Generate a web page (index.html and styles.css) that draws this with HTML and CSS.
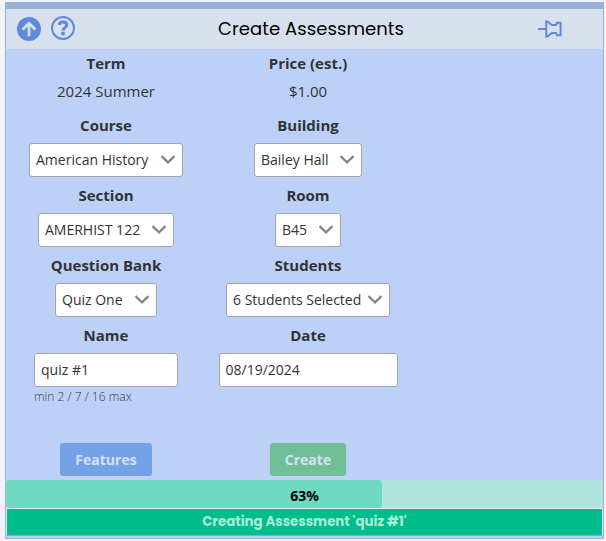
FILE: index.html
```html
<!DOCTYPE html>
<html lang="en">
<head>
<meta charset="utf-8">
<title>Create Assessments</title>
<link rel="stylesheet" href="styles.css">
</head>
<body>
<main class="panel">
  <header class="header">
    <svg class="icon" viewBox="0 0 24 24"><circle cx="12" cy="12" r="12" fill="#5d8add"/><path d="M12 19.2V6.5M5.6 12.6L12 6.2L18.4 12.6" fill="none" stroke="#d8e0ed" stroke-width="2.8"/></svg>
    <svg class="icon help" viewBox="0 0 24 24"><circle cx="12" cy="12" r="11" fill="none" stroke="#5d8add" stroke-width="2"/><path d="M8.2 8.8C8.6 5.2 15.8 5 15.8 9.1C15.8 11.7 12 11.7 12 14.5" fill="none" stroke="#5d8add" stroke-width="3"/><circle cx="12" cy="17.4" r="2" fill="#5d8add"/></svg>
    <h1 class="title"><span>Create Assessments</span></h1>
    <svg class="pin" viewBox="0 0 24 20"><path d="M0 10H8M8.3 2.3V17.7L9.7 17.3L13.8 14H18L19 16.3H22.6V3.7H19L18 6H13.8L9.7 2.7Z" fill="none" stroke="#5d8add" stroke-width="2"/></svg>
  </header>
  <form class="form">
    <div class="field brief"><label>Term</label><span class="value">2024 Summer</span></div>
    <div class="field brief"><label>Price (est.)</label><span class="value">$1.00</span></div>
    <div class="field"><label>Course</label><div class="box course">American History<svg class="chevron" viewBox="0 0 14 9"><path d="M0.5 1.2L7 7.3L13.5 1.2"/></svg></div></div>
    <div class="field"><label>Building</label><div class="box building">Bailey Hall<svg class="chevron" viewBox="0 0 14 9"><path d="M0.5 1.2L7 7.3L13.5 1.2"/></svg></div></div>
    <div class="field"><label>Section</label><div class="box section">AMERHIST 122<svg class="chevron" viewBox="0 0 14 9"><path d="M0.5 1.2L7 7.3L13.5 1.2"/></svg></div></div>
    <div class="field"><label>Room</label><div class="box room">B45<svg class="chevron" viewBox="0 0 14 9"><path d="M0.5 1.2L7 7.3L13.5 1.2"/></svg></div></div>
    <div class="field"><label>Question Bank</label><div class="box bank">Quiz One<svg class="chevron" viewBox="0 0 14 9"><path d="M0.5 1.2L7 7.3L13.5 1.2"/></svg></div></div>
    <div class="field"><label>Students</label><div class="box students">6 Students Selected<svg class="chevron" viewBox="0 0 14 9"><path d="M0.5 1.2L7 7.3L13.5 1.2"/></svg></div></div>
    <div class="field"><label>Name</label><div class="box name">quiz #1</div><small class="hint">min 2 / 7 / 16 max</small></div>
    <div class="field"><label>Date</label><div class="box date">08/19/2024</div></div>
    <div class="action"><button type="button" class="button features">Features</button></div>
    <div class="action"><button type="button" class="button create">Create</button></div>
  </form>
  <div class="progress"><div class="bar" style="width: 63%"></div><span class="percent">63%</span></div>
  <div class="status"><span>Creating Assessment 'quiz #1'</span></div>
</main>
</body>
</html>
```

FILE: styles.css
```css
* { box-sizing: border-box; }
body {
  margin: 0;
  padding: 2px 2px 2px 5px;
  height: 541px;
  background: #f1f3f8;
  font: 14px/20px "Open Sans", sans-serif;
  color: #333;
  overflow: hidden;
}
.panel {
  width: 599px;
  height: 537px;
  border: 1px solid #9bb0d6;
  border-top-width: 7px;
  background: #bdd1f8;
}
.header {
  display: flex;
  align-items: center;
  height: 40px;
  padding: 0 41px 0 11px;
  background: #d8e0ed;
}
.icon { width: 24px; height: 24px; flex: none; }
.help { margin: -2px 0 0 10px; }
.title {
  flex: 1;
  margin: 0;
  padding-left: 9px;
  text-align: center;
  font: 400 18px/40px Poppins, Inter, sans-serif;
  letter-spacing: 0.08px;
  color: #000;
  white-space: nowrap;
}
.pin { width: 24px; height: 20px; flex: none; }
.form {
  display: grid;
  grid-template-columns: 200px 204px 1fr;
  grid-template-rows: 62px repeat(4, 70px) 89px;
  height: 431px;
}
.field, .action { display: flex; flex-direction: column; align-items: center; }
.field:nth-child(odd), .action:nth-child(odd) { grid-column: 1; }
.field:nth-child(even), .action:nth-child(even) { grid-column: 2; }
label { margin-top: 4px; font-size: 15px; font-weight: 700; }
.value { margin-top: 8px; font-size: 15px; }
.box {
  display: flex;
  align-items: center;
  justify-content: space-between;
  flex: none;
  height: 34px;
  margin-top: 8px;
  padding: 0 7px 0 6px;
  border: 1px solid #a4a4a4;
  border-radius: 3px;
  background: #fff;
  white-space: nowrap;
}
.chevron { width: 14px; height: 9px; flex: none; margin-top: -2px; overflow: visible; }
.chevron path { fill: none; stroke: #858585; stroke-width: 2.3; }
.course { width: 154px; }
.building { width: 108px; }
.section { width: 136px; }
.room { width: 66px; }
.bank { width: 102px; }
.students { width: 164px; }
.name { width: 144px; }
.date { width: 179px; }
.hint {
  width: 144px;
  font-size: 12px;
  font-weight: 300;
  line-height: 20px;
}
.action { padding-top: 52px; }
.button {
  height: 33px;
  padding: 0;
  border: 0;
  border-radius: 3px;
  font: 700 14px/33px "Open Sans", sans-serif;
  color: #d5e1f8;
}
.features { width: 92px; background: #74a2e7; }
.create { width: 76px; background: #71bf97; }
.progress {
  display: grid;
  grid-template-rows: 28px;
  height: 28px;
  border-radius: 3px;
  background: #aee6dc;
}
.bar, .percent { grid-area: 1 / 1; }
.bar { border-radius: 3px; background: #70d9c2; }
.percent {
  text-align: center;
  font: 700 14px/32px "Noto Sans", sans-serif;
  color: #000;
}
.status {
  height: 28px;
  border: 1px solid #e6ebf2;
  border-bottom-color: #8fa8c9;
  background: #00bd8b;
  text-align: center;
  font: 700 13.3px/25px Poppins, Inter, sans-serif;
  color: #aaebd9;
}
```
